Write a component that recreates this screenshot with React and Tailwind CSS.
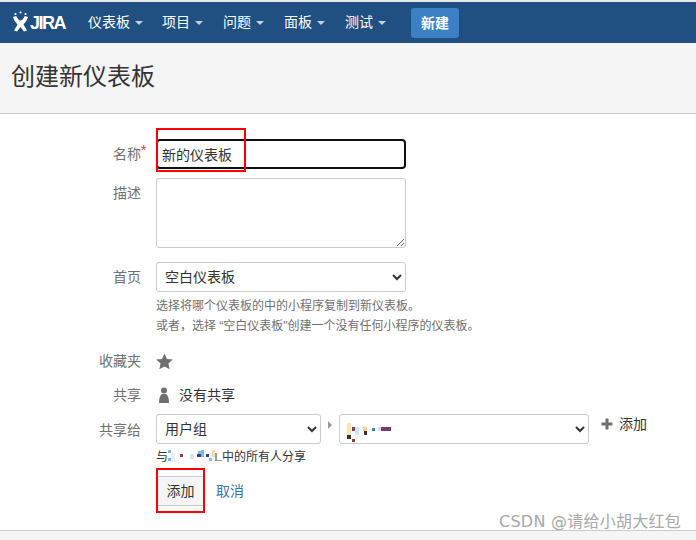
const font = { fontFamily: '"Liberation Sans", "Noto Sans CJK SC", sans-serif' };

function Caret() {
  return <span className="ml-[5px] inline-block border-x-[4px] border-t-[4px] border-x-transparent border-t-[#c4d0dd]" />;
}

function NavItem({ label, className }) {
  return (
    <div className={"flex items-center text-sm leading-5 text-white " + (className || "")}>
      <span className="mt-[-1px]">{label}</span>
      <Caret />
    </div>
  );
}

function Row({ label, required, children, className, labelClass }) {
  return (
    <div className={"flex " + (className || "")}>
      <div className={"relative w-[141px] shrink-0 text-right text-sm leading-5 text-[#707070] " + (labelClass || "mt-[5px]")}>
        {label}
        {required && <span className="absolute left-[141px] top-[-4px] text-sm text-[#d04437]">*</span>}
      </div>
      <div className="ml-[15px] min-w-0 flex-1">{children}</div>
    </div>
  );
}

function Mosaic({ width, height, rects, className }) {
  return (
    <svg width={width} height={height} viewBox={`0 0 ${width} ${height}`} className={className}>
      {rects.map(([x, y, w, h, c], i) => (
        <rect key={i} x={x} y={y} width={w} height={h} fill={c} />
      ))}
    </svg>
  );
}

const mosaicA = [
  [8, 9, 4, 12, "#fbe3b5"],
  [8, 21, 4, 4, "#333333"],
  [13, 13, 3, 4, "#8c3a45"],
  [16, 13, 4, 8, "#cfe6fb"],
  [13, 25, 3, 3, "#8c3a45"],
  [24, 13, 4, 4, "#f5cf8c"],
  [25, 17, 3, 4, "#333333"],
  [33, 14, 3, 3, "#3b7fc4"],
  [39, 13, 3, 4, "#cfe6fb"],
  [42, 13, 10, 4, "#7a3a6e"],
];

const mosaicB = [
  [0, 0, 3, 3, "#7db9ea"],
  [0, 8, 3, 3, "#7db9ea"],
  [3, 3, 4, 9, "#e4f1fb"],
  [12, 4, 3, 3, "#8c3a45"],
  [22, 4, 4, 5, "#d8e6f7"],
  [30, 1, 3, 3, "#7db9ea"],
  [29, 4, 4, 3, "#3d3a8c"],
  [33, 0, 3, 7, "#7db9ea"],
  [38, 4, 3, 3, "#3d3a8c"],
  [44, 0, 3, 7, "#f5d9b0"],
  [41, 8, 3, 3, "#7db9ea"],
  [47, 3, 2, 7, "#9a9a9a"],
  [47, 10, 7, 1, "#9a9a9a"],
];

export default function App() {
  return (
    <div style={font} className="flex h-[540px] w-[696px] flex-col overflow-hidden bg-white text-[#333]">
      <div className="h-[2px] bg-[#e8e8e8]" />
      <nav className="flex h-[41px] items-center bg-[#205081]">
        <div className="ml-[13px] flex w-[55px] items-center">
          <svg width="17" height="21" viewBox="0 0 17 21" className="mb-[2px]">
            <g fill="#fff">
              <circle cx="2.5" cy="3" r="1.1" />
              <circle cx="7.5" cy="1.5" r="1.1" />
              <circle cx="12.5" cy="3" r="1.1" />
              <path d="M0 6 L3.2 5 Q5.5 9.5 7.5 9.5 Q9.5 9.5 11.8 5 L15 6 Q13.5 11 10.5 13.5 L14 19.5 L11 20.5 L7.5 16 L4 20.5 L1 19.5 L4.5 13.5 Q1.5 11 0 6 Z" />
            </g>
          </svg>
          <span className="text-[18px] font-bold leading-5 tracking-[-1.5px] text-white">JIRA</span>
        </div>
        <div className="ml-[20px] flex items-center gap-[20px]">
          <NavItem label="仪表板" className="mr-[-1px]" />
          <NavItem label="项目" />
          <NavItem label="问题" />
          <NavItem label="面板" />
          <NavItem label="测试" />
        </div>
        <button className="ml-[25px] h-[30px] w-[48px] rounded-[3px] bg-[#3b7fc4] text-sm font-bold text-white">新建</button>
      </nav>

      <header className="flex h-[71px] items-center border-b border-[#cccccc] bg-[#f5f5f5] pl-[11px]">
        <h1 className="mb-[3px] text-2xl font-normal leading-8 text-[#333]">创建新仪表板</h1>
      </header>

      <main className="relative flex-1 pt-[25px]">
        <Row label="名称" required>
          <div className="flex h-[30px] w-[250px] items-center rounded-[4px] border-2 border-[#101010] pl-[4px] pt-px text-sm text-[#333]">
            新的仪表板
          </div>
        </Row>
        <Row label="描述" className="mt-[9px]">
          <textarea readOnly className="block h-[70px] w-[250px] rounded-[3px] border border-[#cccccc] bg-white outline-none" />
        </Row>
        <Row label="首页" className="mt-[14px]">
          <select style={font} className="block h-[30px] w-[250px] rounded-[3px] border border-[#cccccc] bg-white pl-[4px] text-sm text-[#333] outline-none">
            <option>空白仪表板</option>
          </select>
          <p className="mt-[4px] text-xs leading-5 text-[#707070]">选择将哪个仪表板的中的小程序复制到新仪表板。</p>
          <p className="text-xs leading-5 text-[#707070]">或者，选择 “空白仪表板"创建一个没有任何小程序的仪表板。</p>
        </Row>
        <Row label="收藏夹" className="mt-[14px]" labelClass="mt-px">
          <svg width="17" height="17" viewBox="0 0 16 16" className="mt-[3px]">
            <path fill="#707070" d="M8 0.5 L10.3 5.6 L15.8 6.2 L11.7 9.9 L12.9 15.4 L8 12.6 L3.1 15.4 L4.3 9.9 L0.2 6.2 L5.7 5.6 Z" />
          </svg>
        </Row>
        <Row label="共享" className="mt-[14px]" labelClass="mt-0">
          <div className="flex items-center text-sm leading-5 text-[#333]">
            <svg width="12" height="17" viewBox="0 0 12 17" className="ml-[2px]">
              <circle cx="6" cy="3.5" r="3" fill="#707070" />
              <path fill="#707070" d="M4 7 H8 Q11 9 11 16 H1 Q1 9 4 7 Z" />
            </svg>
            <span className="ml-[9px]">没有共享</span>
          </div>
        </Row>
        <Row label="共享给" className="mt-[9px]" labelClass="mt-[6px]">
          <div className="flex items-start">
            <select style={font} className="block h-[30px] w-[165px] rounded-[3px] border border-[#cccccc] bg-white pl-[4px] text-sm text-[#333] outline-none">
              <option>用户组</option>
            </select>
            <span className="ml-[7px] mt-[7px] inline-block border-y-[4px] border-l-[4px] border-y-transparent border-l-[#999]" />
            <div className="relative ml-[7px] h-[30px] w-[250px]">
              <select style={font} className="block h-[30px] w-[250px] rounded-[3px] border border-[#cccccc] bg-white text-sm outline-none">
                <option></option>
              </select>
              <Mosaic width={52} height={30} rects={mosaicA} className="absolute left-0 top-0" />
            </div>
            <div className="ml-[12px] flex items-center text-sm leading-5 text-[#333]">
              <svg width="12" height="12" viewBox="0 0 12 12">
                <path fill="#707070" d="M4.5 0.5 H7.5 V4.5 H11.5 V7.5 H7.5 V11.5 H4.5 V7.5 H0.5 V4.5 H4.5 Z" />
              </svg>
              <span className="ml-[6px]">添加</span>
            </div>
          </div>
          <div className="mt-[3px] flex items-center text-xs leading-5 text-[#333]">
            <span>与</span>
            <Mosaic width={54} height={14} rects={mosaicB} />
            <span>中的所有人分享</span>
          </div>
          <div className="mt-[9px] flex items-center">
            <button className="ml-px h-[30px] w-[46px] border-y border-[#cccccc] bg-[#f5f5f5] pl-px text-sm text-[#333]">添加</button>
            <span className="ml-[13px] mt-[-1px] text-sm text-[#3b73af]">取消</span>
          </div>
        </Row>

        <div className="absolute left-[156px] top-[14px] h-[44px] w-[90px] border-2 border-[#ff0000]" />
        <div className="absolute left-[156px] top-[354px] h-[45px] w-[49px] border-2 border-[#ff0000]" />
        <div style={{ fontFamily: '"DejaVu Sans", "Noto Sans CJK SC", sans-serif' }} className="absolute right-[15px] top-[398px] text-base leading-5 tracking-[0.25px] text-[#a8a8a8]">
          CSDN @请给小胡大红包
        </div>
      </main>

      <footer className="h-[10px] border-t border-[#cccccc] bg-[#f5f5f5]" />
    </div>
  );
}
